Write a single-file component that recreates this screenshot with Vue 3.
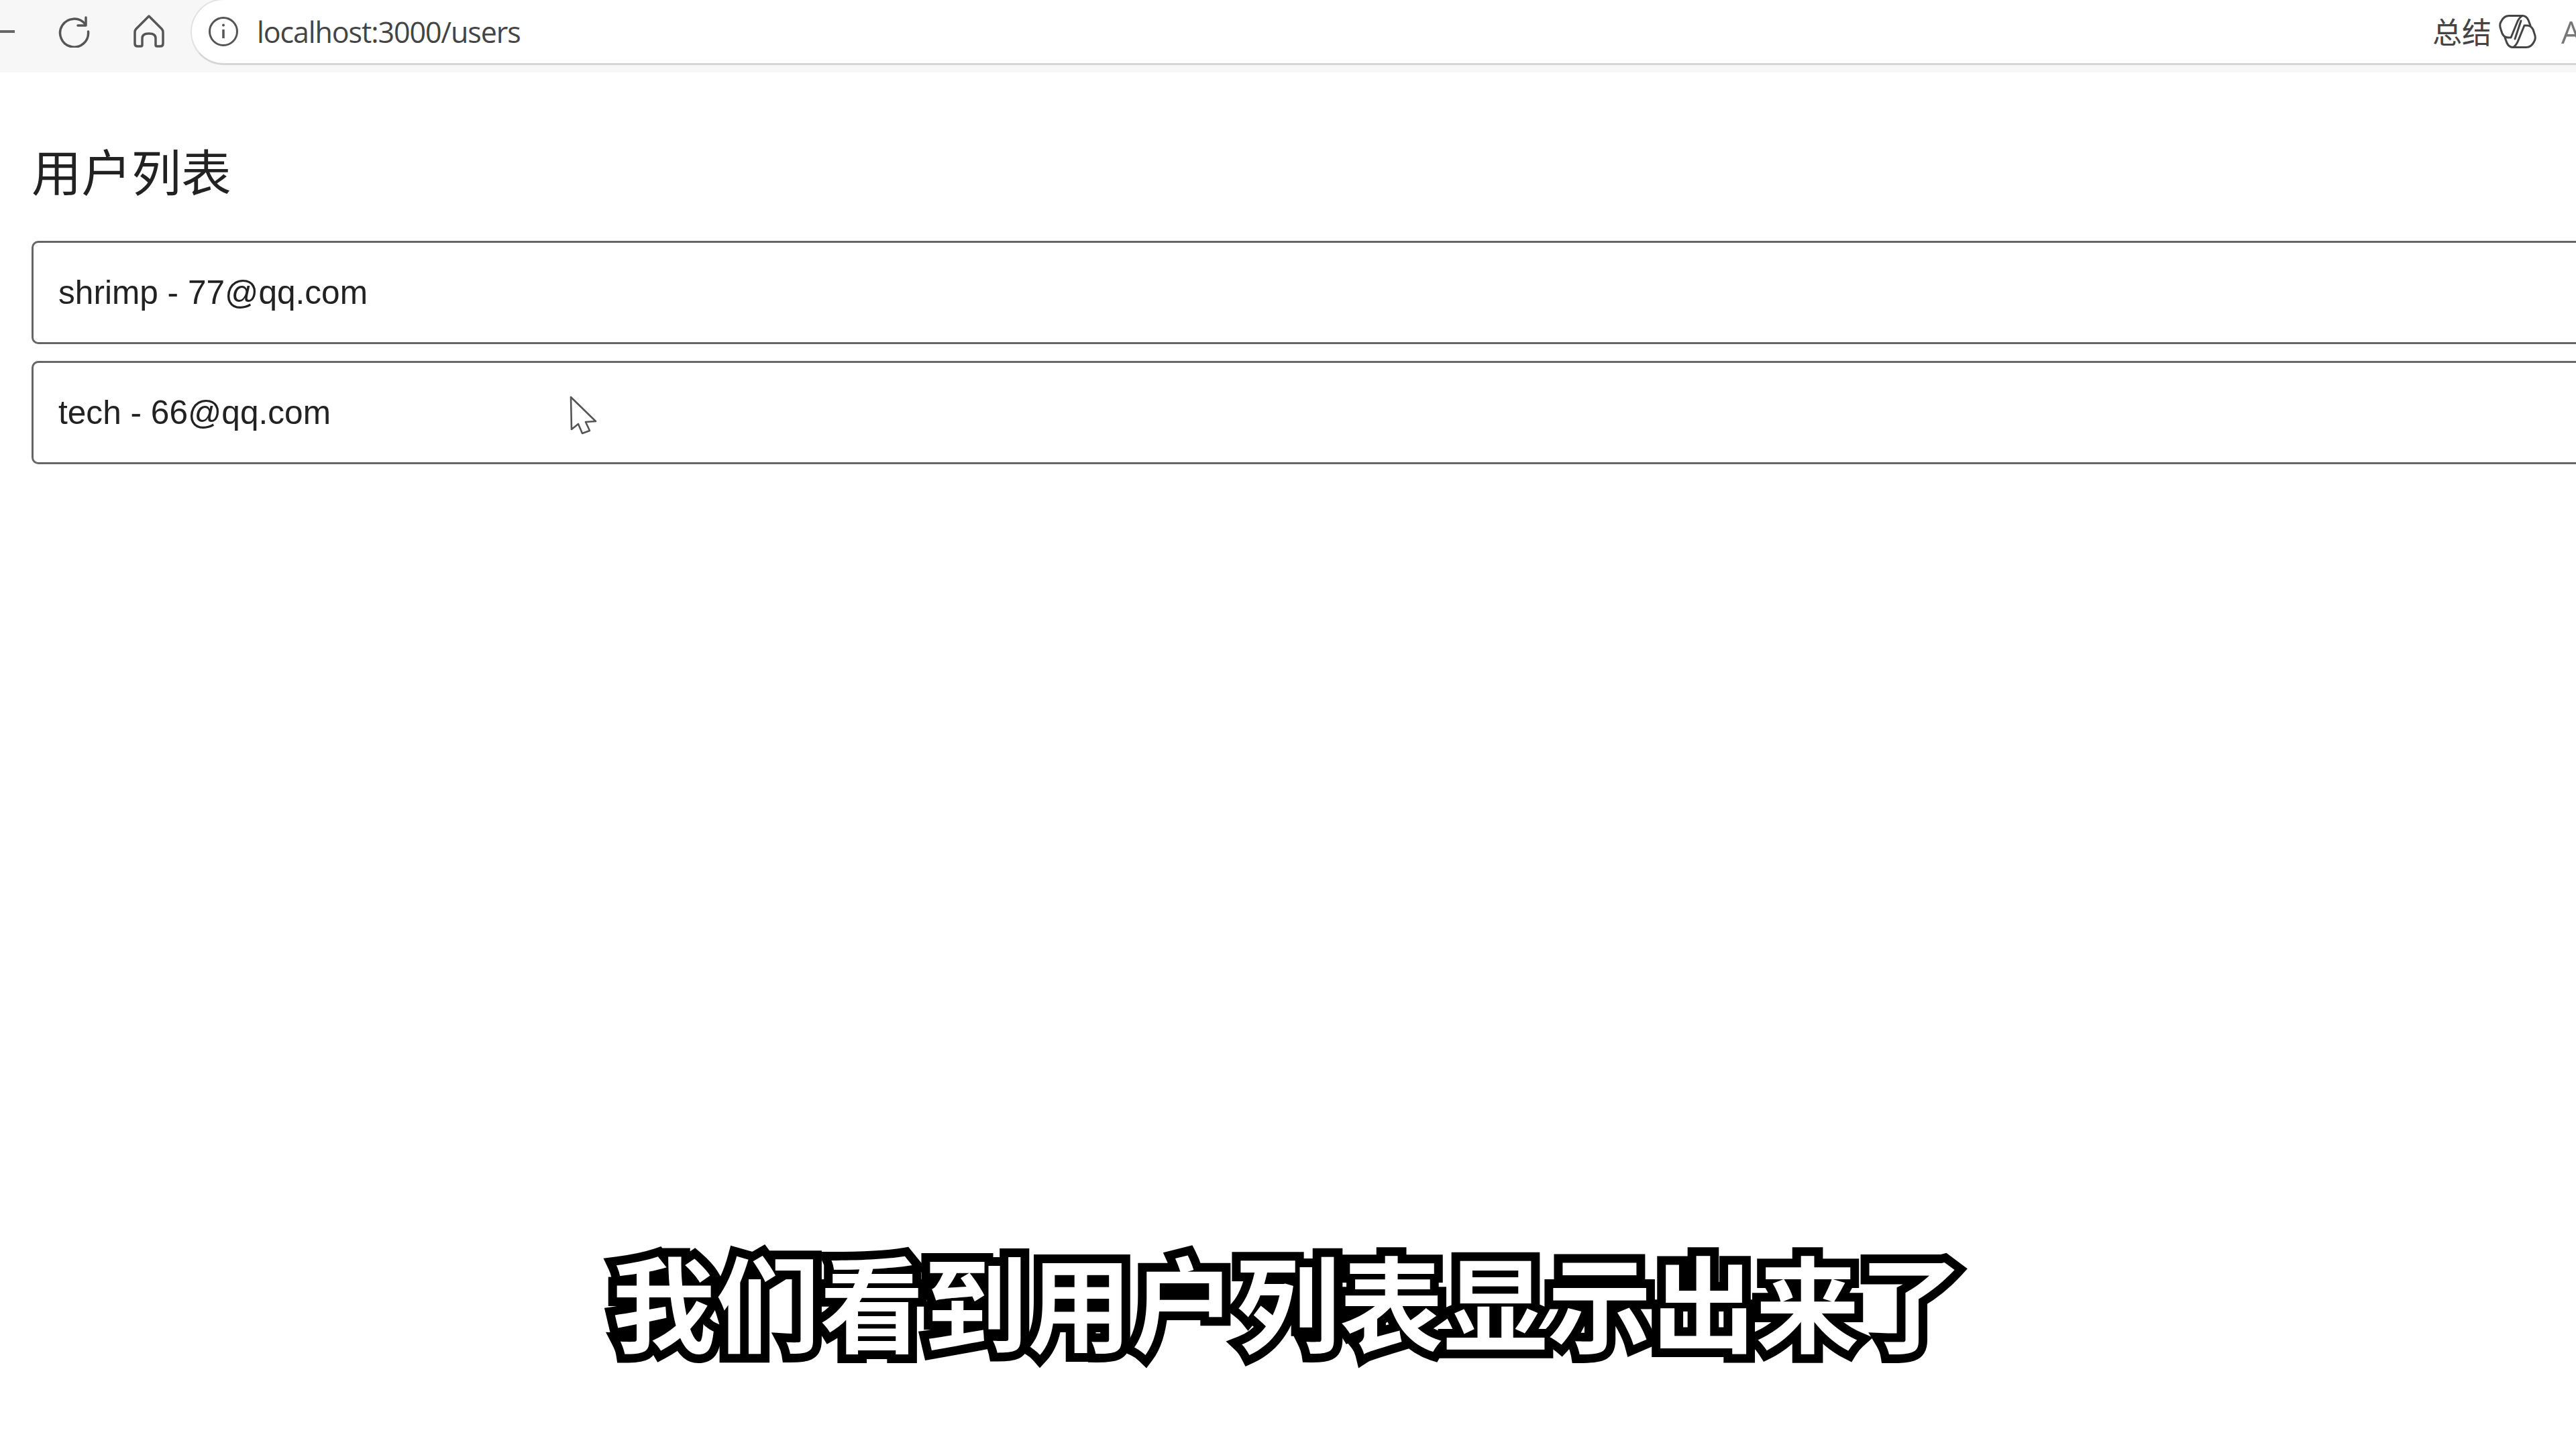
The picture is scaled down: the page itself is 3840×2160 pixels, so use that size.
<script setup>
const users = [
  { name: 'shrimp', email: '77@qq.com' },
  { name: 'tech', email: '66@qq.com' }
]
</script>

<template>
  <div class="page">
    <header class="toolbar">
      <span class="minus"></span>
      <svg class="ic reload" viewBox="86 23 48 48" width="48" height="48" fill="none" stroke="#555" stroke-width="3.5" stroke-linecap="round" stroke-linejoin="round">
        <path d="M127 36A21 21 0 1 0 131.5 47" />
        <path d="M128 26V38H116" />
      </svg>
      <svg class="ic home" viewBox="198 21 48 52" width="48" height="52" fill="none" stroke="#555" stroke-width="3.5" stroke-linejoin="round">
        <path d="M222 24L241 43Q243 45 243 48V65Q243 69 239 69H234Q232 69 232 67V57Q232 50 222 50Q212 50 212 57V67Q212 69 210 69H205Q201 69 201 65V48Q201 45 203 43Z" />
      </svg>
      <div class="address">
        <svg class="info" viewBox="0 0 46 46" width="46" height="46" fill="none" stroke="#555" stroke-width="3">
          <circle cx="23" cy="23" r="20.5" />
          <path d="M23 20V33" stroke-width="3.5" />
          <circle cx="23" cy="13.5" r="2" fill="#555" stroke="none" />
        </svg>
        <span class="url">localhost:3000/users</span>
        <span class="grow"></span>
        <span class="summary">总结</span>
        <svg class="copilot" viewBox="0 0 56 50" width="56" height="50" fill="none" stroke="#444" stroke-width="3" stroke-linejoin="round" stroke-linecap="round">
          <path d="M15 1.5H35Q30 4 27 12L18 34H14Q8 34 5 28L3 22Q0 14 4 9Q8 1.5 15 1.5Z" />
          <path d="M41 48.5H21Q26 46 29 38L38 16H42Q48 16 51 22L53 28Q56 36 52 41Q48 48.5 41 48.5Z" />
          <path d="M35 1.5Q41 1.5 44 8L47 16" />
          <path d="M21 48.5Q15 48.5 12 42L9 34" />
          <path d="M33 9L24 36" />
        </svg>
        <span class="letter">A</span>
      </div>
    </header>

    <main class="content">
      <h1 class="title">用户列表</h1>
      <ul class="list">
        <li v-for="u in users" :key="u.name" class="card">{{ u.name }} - {{ u.email }}</li>
      </ul>
    </main>

    <svg class="cursor" viewBox="0 0 44 60" width="44" height="60" fill="#fff" stroke="#555" stroke-width="2.6" stroke-linejoin="round">
      <path d="M3 2L4 50L14 42L20 56L31 52L25 39L40 38Z" />
    </svg>

    <div class="caption">我们看到用户列表显示出来了</div>
  </div>
</template>

<style scoped>
.page {
  position: relative;
  width: 3840px;
  height: 2160px;
  overflow: hidden;
  background: #fff;
  font-family: "Liberation Sans", "Noto Sans CJK SC", sans-serif;
  color: #222;
}
.toolbar {
  display: flex;
  align-items: flex-start;
  height: 108px;
  background: #f7f7f7;
  filter: blur(0.7px);
}
.minus {
  width: 22px;
  height: 4px;
  margin-top: 45px;
  background: #666;
}
.ic {
  flex: none;
}
.reload {
  margin: 23px 0 0 64px;
}
.home {
  margin: 21px 0 0 64px;
}
.address {
  flex: 1;
  display: flex;
  align-items: center;
  height: 99px;
  margin: -2px -60px 0 38px;
  padding: 0 51px 0 24px;
  box-sizing: border-box;
  background: #fff;
  border: 2px solid #e2e2e2;
  border-bottom: 3px solid #d6d6d6;
  border-radius: 50px;
}
.info {
  flex: none;
}
.url {
  margin-left: 27px;
  font-family: "Open Sans", sans-serif;
  font-size: 43px;
  letter-spacing: -1.1px;
  color: #444;
}
.grow {
  flex: 1;
}
.summary {
  margin-top: -3px;
  font-family: "Noto Sans CJK SC", sans-serif;
  font-size: 44px;
  color: #444;
}
.copilot {
  flex: none;
  margin-left: 11px;
}
.letter {
  margin-left: 37px;
  font-family: "Open Sans", sans-serif;
  font-size: 46px;
  color: #777;
}
.content {
  padding: 0 47px;
  filter: blur(0.5px);
}
.title {
  margin: 100px 0 61px;
  font-family: "Noto Sans CJK SC", sans-serif;
  font-size: 74.4px;
  font-weight: 400;
  line-height: 90px;
  color: #222;
}
.list {
  display: flex;
  flex-direction: column;
  gap: 25px;
  width: 3900px;
  margin: 0;
  padding: 0;
  list-style: none;
}
.card {
  display: flex;
  align-items: center;
  height: 154px;
  padding: 0 37px;
  box-sizing: border-box;
  border: 3px solid #666;
  border-radius: 10px;
  font-size: 49.6px;
}
.cursor {
  position: absolute;
  left: 848px;
  top: 590px;
}
.caption {
  position: absolute;
  left: 912px;
  top: 1830px;
  white-space: nowrap;
  font-family: "Noto Sans CJK SC", sans-serif;
  font-size: 155px;
  font-weight: 700;
  line-height: 214px;
  color: #fff;
  -webkit-text-stroke: 26px #000;
  paint-order: stroke fill;
  text-shadow: 3px 5px 0 #000;
}
</style>
